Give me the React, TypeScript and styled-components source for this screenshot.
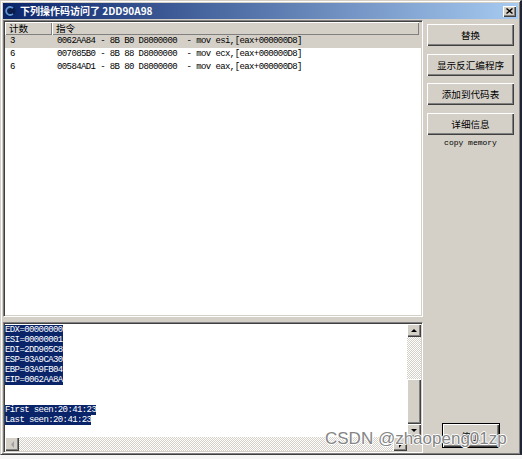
import React from "react";
import styled, { createGlobalStyle } from "styled-components";

const GlobalStyle = createGlobalStyle`
  html, body { margin: 0; padding: 0; background: #f6f6f6; }
  body { width: 522px; height: 459px; overflow: hidden; font-family: "Noto Sans CJK SC", "Liberation Sans", sans-serif; }
  * { box-sizing: border-box; }
`;

const Root = styled.div`
  position: relative;
  width: 522px;
  height: 459px;
`;

const Window = styled.div`
  width: 522px;
  height: 455px;
  background: #d4d0c8;
  border-top: 1px solid #d4d0c8;
  border-left: 1px solid #d4d0c8;
  border-right: 2px solid #1e2636;
  border-bottom: 1px solid #404040;
  box-shadow: inset 1px 1px 0 #ffffff, inset -1px -1px 0 #808080;
  padding: 2px 2px 1px 2px;
  display: flex;
  flex-direction: column;
`;

const TitleBar = styled.div`
  height: 16px;
  flex: none;
  display: flex;
  align-items: center;
  background: linear-gradient(90deg, #0a246a 0%, #a6caf0 100%);
  padding: 0 2px 0 1px;
`;

const IconBox = styled.div`
  width: 12px;
  height: 12px;
  flex: none;
  display: flex;
`;

const TitleText = styled.div`
  margin-left: 4px;
  flex: 1;
  color: #ffffff;
  font-weight: bold;
  font-size: 10px;
  line-height: 16px;
  white-space: nowrap;
`;

const CloseButton = styled.div`
  width: 13px;
  height: 11px;
  flex: none;
  background: #d4d0c8;
  box-shadow: inset 1px 1px 0 #ffffff, inset -1px -1px 0 #404040, inset -2px -2px 0 #808080;
  display: flex;
  align-items: center;
  justify-content: center;
`;

const Body = styled.div`
  flex: 1;
  display: flex;
  min-height: 0;
`;

const LeftPane = styled.div`
  width: 420px;
  flex: none;
  display: flex;
  flex-direction: column;
  padding-top: 1px;
  gap: 5px;
`;

const Sunken = styled.div`
  background: #ffffff;
  border: 1px solid;
  border-color: #808080 #ffffff #ffffff #808080;
  box-shadow: inset 1px 1px 0 #404040, inset -1px -1px 0 #d4d0c8;
  padding: 1px;
`;

const ListView = styled(Sunken)`
  height: 297px;
  flex: none;
  display: flex;
  flex-direction: column;
`;

const HeaderRow = styled.div`
  height: 13px;
  flex: none;
  display: flex;
  background: #d4d0c8;
`;

const HeaderCell = styled.div<{ $w: number }>`
  width: ${(p) => p.$w}px;
  flex: none;
  height: 13px;
  box-shadow: inset 1px 1px 0 #ffffff, inset -1px -1px 0 #808080;
  font-size: 9.6px;
  line-height: 13px;
  padding-left: 4px;
  color: #000;
`;

const Row = styled.div<{ $selected?: boolean }>`
  height: 13px;
  display: flex;
  background: ${(p) => (p.$selected ? "#d4d0c8" : "#ffffff")};
  font-family: "Liberation Mono", monospace;
  font-size: 9px;
  letter-spacing: -0.6px;
  line-height: 13px;
  color: #000;
  white-space: pre;
`;

const CountCell = styled.div`
  width: 47px;
  flex: none;
  padding-left: 5px;
`;

const InstrCell = styled.div`
  flex: 1;
  padding-left: 5px;
`;

const Memo = styled(Sunken)`
  flex: 1;
  display: grid;
  grid-template-columns: 1fr 14px;
  grid-template-rows: 1fr 14px;
  min-height: 0;
`;

const MemoText = styled.div`
  padding-top: 1px;
  font-family: "Liberation Mono", monospace;
  font-size: 9px;
  letter-spacing: -0.6px;
  overflow: hidden;
`;

const MemoLine = styled.div<{ $sel?: boolean }>`
  height: 10px;
  line-height: 10px;
  width: fit-content;
  white-space: pre;
  color: ${(p) => (p.$sel ? "#ffffff" : "#000")};
  background: ${(p) => (p.$sel ? "#0a246a" : "transparent")};
`;

const Raised = styled.div`
  background: #d4d0c8;
  box-shadow: inset 1px 1px 0 #ffffff, inset -1px -1px 0 #404040, inset -2px -2px 0 #808080;
  display: flex;
  align-items: center;
  justify-content: center;
`;

const Track = styled.div`
  flex: 1;
  background-color: #ffffff;
  background-image: repeating-conic-gradient(#d4d0c8 0 25%, #ffffff 0 50%);
  background-size: 2px 2px;
`;

const VScroll = styled.div`
  display: flex;
  flex-direction: column;
`;

const HScroll = styled.div`
  display: flex;
`;

const ScrollBtn = styled(Raised)`
  width: 14px;
  height: 13px;
  flex: none;
`;

const HScrollBtn = styled(Raised)`
  width: 14px;
  height: 14px;
  flex: none;
`;

const Thumb = styled(Raised)`
  height: 45px;
  flex: none;
`;

const Corner = styled.div`
  background: #d4d0c8;
`;

const SidePanel = styled.div`
  flex: 1;
  display: flex;
  flex-direction: column;
  padding: 5px 4px 5px 4px;
`;

const ButtonStack = styled.div`
  display: flex;
  flex-direction: column;
  gap: 7.5px;
`;

const ActionButton = styled(Raised)`
  height: 22px;
  font-size: 9.6px;
  color: #000;
`;

const Caption = styled.div`
  margin-top: 3px;
  text-align: center;
  font-family: "Liberation Mono", monospace;
  font-size: 8px;
  line-height: 9px;
  color: #000;
`;

const Spacer = styled.div`
  flex: 1;
`;

const StopButton = styled(Raised)`
  align-self: center;
  width: 58px;
  height: 25px;
  border: 1px solid #000;
  font-size: 9.6px;
  color: #000;
`;

const Watermark = styled.div`
  position: absolute;
  left: 325px;
  top: 430px;
  font-family: "Liberation Sans", Arial, sans-serif;
  font-size: 17px;
  line-height: 17px;
  color: #858585;
  white-space: nowrap;
  text-shadow: -1px 0 #fff, 1px 0 #fff, 0 -1px #fff, 0 1px #fff;
`;

const rows = [
  { count: "3", text: "0062AA84 - 8B B0 D8000000  - mov esi,[eax+000000D8]", selected: true },
  { count: "6", text: "007085B0 - 8B 88 D8000000  - mov ecx,[eax+000000D8]" },
  { count: "6", text: "00584AD1 - 8B 80 D8000000  - mov eax,[eax+000000D8]" },
];

const memoLines = [
  "EDX=00000000",
  "ESI=00000001",
  "EDI=2DD905C8",
  "ESP=03A9CA30",
  "EBP=03A9FB04",
  "EIP=0062AA8A",
  "",
  "",
  "First seen:20:41:23",
  "Last seen:20:41:23",
];

const Arrow = ({ dir, color = "#000" }: { dir: "up" | "down" | "left" | "right"; color?: string }) => {
  const pts =
    dir === "up"
      ? "1,4 4,1 7,4"
      : dir === "down"
      ? "1,1 4,4 7,1"
      : dir === "left"
      ? "4,0 1,3.5 4,7"
      : "1,0 4,3.5 1,7";
  const w = dir === "up" || dir === "down" ? 8 : 5;
  const h = dir === "up" || dir === "down" ? 5 : 7;
  return (
    <svg width={w} height={h} viewBox={`0 0 ${w} ${h}`}>
      <polygon points={pts} fill={color} />
    </svg>
  );
};

export default function App() {
  return (
    <Root>
      <GlobalStyle />
      <Window>
        <TitleBar>
          <IconBox>
            <svg width="12" height="12" viewBox="0 0 12 12">
              <circle cx="6" cy="6" r="5.5" fill="#0c1d4a" />
              <path d="M9 3.2 A4 4 0 1 0 9 8.8" fill="none" stroke="#5e93d6" strokeWidth="1.8" />
            </svg>
          </IconBox>
          <TitleText>下列操作码访问了 2DD90A98</TitleText>
          <CloseButton>
            <svg width="7" height="6" viewBox="0 0 7 6">
              <path d="M0.5 0.5 L6.5 5.5 M6.5 0.5 L0.5 5.5" stroke="#000" strokeWidth="1.4" />
            </svg>
          </CloseButton>
        </TitleBar>
        <Body>
          <LeftPane>
            <ListView>
              <HeaderRow>
                <HeaderCell $w={47}>计数</HeaderCell>
                <HeaderCell $w={367}>指令</HeaderCell>
              </HeaderRow>
              {rows.map((r, i) => (
                <Row key={i} $selected={r.selected}>
                  <CountCell>{r.count}</CountCell>
                  <InstrCell>{r.text}</InstrCell>
                </Row>
              ))}
            </ListView>
            <Memo>
              <MemoText>
                {memoLines.map((l, i) => (
                  <MemoLine key={i} $sel={l.length > 0}>
                    {l}
                  </MemoLine>
                ))}
              </MemoText>
              <VScroll>
                <ScrollBtn>
                  <Arrow dir="up" />
                </ScrollBtn>
                <Track />
                <Thumb />
                <ScrollBtn>
                  <Arrow dir="down" />
                </ScrollBtn>
              </VScroll>
              <HScroll>
                <HScrollBtn>
                  <Arrow dir="left" color="#a0a0a0" />
                </HScrollBtn>
                <Track />
                <HScrollBtn>
                  <Arrow dir="right" />
                </HScrollBtn>
              </HScroll>
              <Corner />
            </Memo>
          </LeftPane>
          <SidePanel>
            <ButtonStack>
              <ActionButton>替换</ActionButton>
              <ActionButton>显示反汇编程序</ActionButton>
              <ActionButton>添加到代码表</ActionButton>
              <ActionButton>详细信息</ActionButton>
            </ButtonStack>
            <Caption>copy memory</Caption>
            <Spacer />
            <StopButton>停止</StopButton>
          </SidePanel>
        </Body>
      </Window>
      <Watermark>CSDN @zhaopeng01zp</Watermark>
    </Root>
  );
}
